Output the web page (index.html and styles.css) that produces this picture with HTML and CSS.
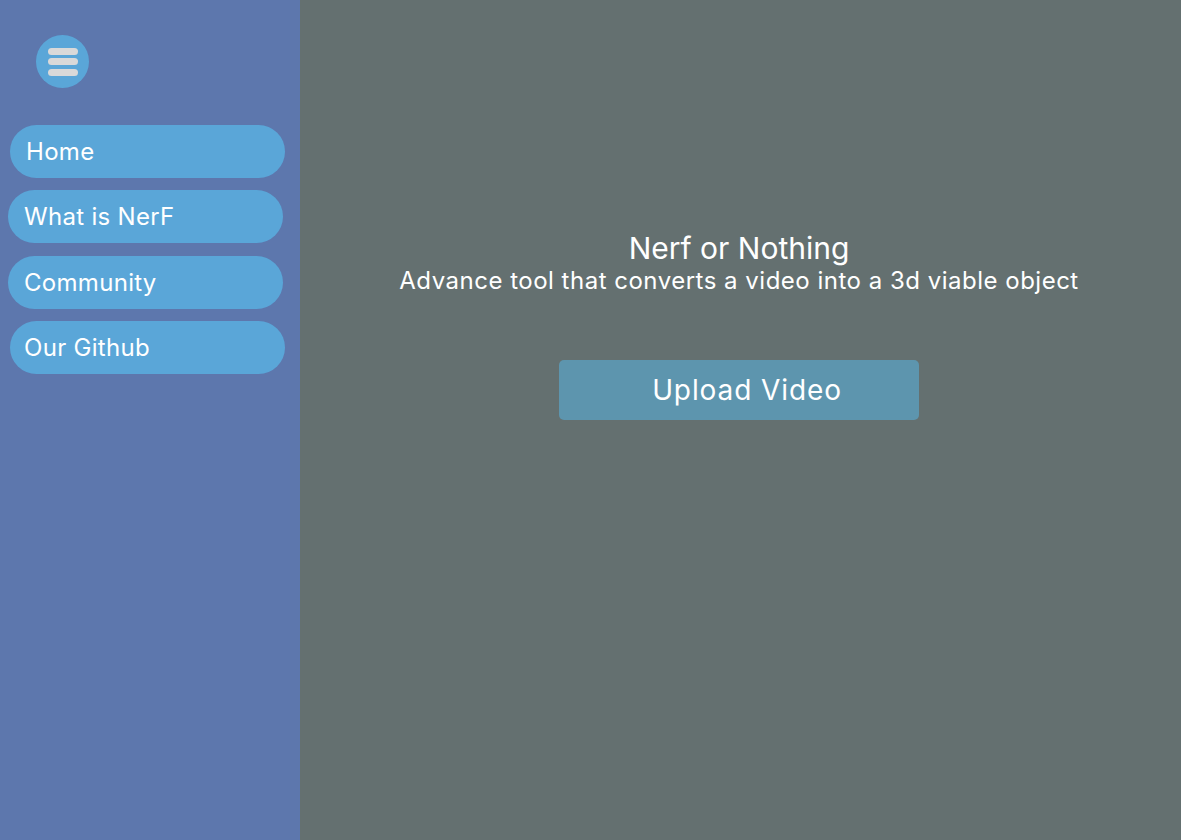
FILE: index.html
```html
<!DOCTYPE html>
<html lang="en">
<head>
<meta charset="utf-8">
<title>Nerf or Nothing</title>
<link rel="stylesheet" href="styles.css">
</head>
<body>
<div class="app">
  <aside class="sidebar">
    <button class="menu-btn" aria-label="Menu">
      <span class="bar"></span><span class="bar"></span><span class="bar"></span>
    </button>
    <nav class="nav">
      <a class="nav-item shift" href="#">Home</a>
      <a class="nav-item" href="#">What is NerF</a>
      <a class="nav-item" href="#">Community</a>
      <a class="nav-item shift narrow" href="#">Our Github</a>
    </nav>
  </aside>
  <main class="main">
    <h1 class="title">Nerf or Nothing</h1>
    <p class="subtitle">Advance tool that converts a video into a 3d viable object</p>
    <button class="upload">Upload Video</button>
  </main>
</div>
</body>
</html>
```
FILE: styles.css
```css
* { box-sizing: border-box; }
html, body { margin: 0; padding: 0; }
body {
  font-family: Inter, "Noto Sans", sans-serif;
  font-weight: 400;
  color: #fff;
}
.app {
  display: flex;
  width: 1181px;
  height: 840px;
}
.sidebar {
  width: 300px;
  flex-shrink: 0;
  background: #5d77ad;
  padding: 35px 0 0 8px;
}
.menu-btn {
  width: 53px;
  height: 53px;
  margin-left: 28px;
  border-radius: 50%;
  border: none;
  background: #5aa6d8;
  padding: 0;
  display: flex;
  flex-direction: column;
  align-items: center;
  justify-content: center;
  gap: 3.5px;
}
.bar {
  display: block;
  width: 30px;
  height: 7px;
  border-radius: 4px;
  background: #d9d9d9;
}
.nav {
  margin-top: 37px;
  display: flex;
  flex-direction: column;
  gap: 12.3px;
}
.nav-item {
  display: flex;
  align-items: center;
  width: 275px;
  height: 53px;
  border-radius: 27px;
  background: #5aa6d8;
  color: #fff;
  text-decoration: none;
  font-size: 24px;
  letter-spacing: 0.3px;
  padding-left: 16px;
}
.nav-item.shift { margin-left: 2px; }
.nav-item.narrow { padding-left: 14px; }
.main {
  flex: 1;
  background: #647070;
  display: flex;
  flex-direction: column;
  align-items: center;
  padding: 231px 3px 0 0;
}
.title {
  margin: 0;
  font-size: 30px;
  font-weight: 400;
  line-height: 35px;
}
.subtitle {
  margin: 0;
  font-size: 24px;
  line-height: 30px;
  letter-spacing: 0.5px;
}
.upload {
  margin-top: 64px;
  width: 360px;
  height: 60px;
  border: none;
  border-radius: 5px;
  background: #5d95ae;
  color: #fff;
  font-family: Inter, "Noto Sans", sans-serif;
  font-weight: 400;
  font-size: 28px;
  letter-spacing: 0.9px;
  padding: 0 0 0 16px;
}
```
